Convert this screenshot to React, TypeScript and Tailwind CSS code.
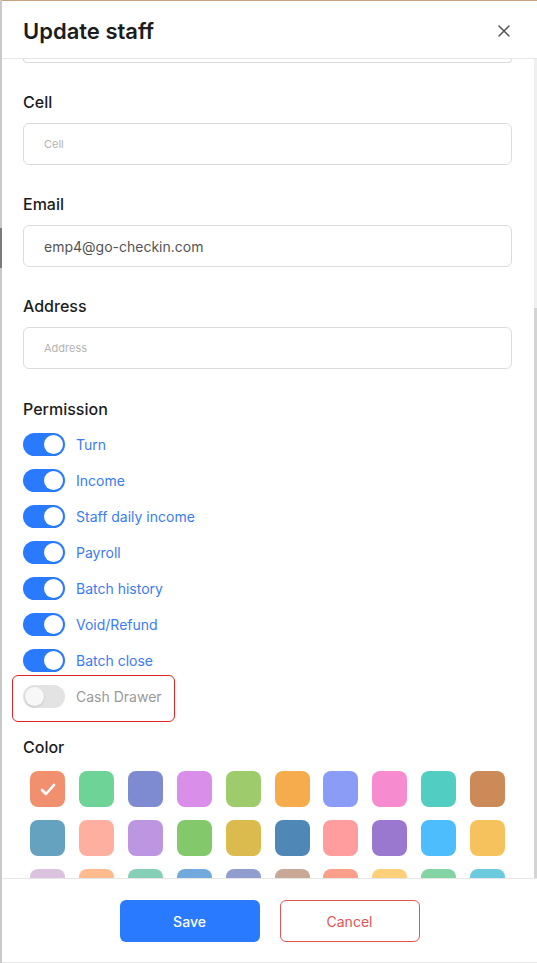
import { X } from "lucide-react"

const perms = [
  { name: "Turn", on: true },
  { name: "Income", on: true },
  { name: "Staff daily income", on: true },
  { name: "Payroll", on: true },
  { name: "Batch history", on: true },
  { name: "Void/Refund", on: true },
  { name: "Batch close", on: true },
  { name: "Cash Drawer", on: false },
]

const colors = [
  "#f0906e", "#6dd396", "#7f8bd0", "#d98ee9", "#9ecb6c", "#f6ab4c", "#8a9cf5", "#f78bcf", "#52cdc1", "#cc8a59",
  "#64a2c0", "#ffafa0", "#bc96e0", "#83c86a", "#dbbb4d", "#4f87b6", "#ff9c9d", "#9a78cf", "#4dbdfd", "#f5c25d",
  "#ddc1e0", "#ffbb8d", "#84cfb5", "#72aade", "#8f9dcf", "#c7a996", "#fa9f89", "#ffcf7b", "#84d3a3", "#6ccadf",
]

function Toggle({ on }: { on: boolean }) {
  return on ? (
    <div className="flex h-[23px] w-[42px] items-center justify-end rounded-full bg-[#2a7aff] px-[2px]">
      <div className="h-[19px] w-[19px] rounded-full bg-white" />
    </div>
  ) : (
    <div className="flex h-[23px] w-[42px] items-center justify-start rounded-full bg-[#e3e3e3] px-[2px]">
      <div className="h-[19px] w-[19px] rounded-full bg-[#f7f7f7] shadow-sm" />
    </div>
  )
}

function Field({ label, value, placeholder }: { label: string; value?: string; placeholder?: string }) {
  return (
    <div className="mt-[27px]">
      <div className="text-[16px] leading-[24px] font-medium text-[#1c1c1c]">{label}</div>
      <div className="mt-[9px] flex h-[42px] items-center rounded-md border border-[#dcdcdc] px-[20px]">
        {value ? (
          <span className="text-[14px] text-[#555]">{value}</span>
        ) : (
          <span className="text-[11px] text-[#b3b3b3]">{placeholder}</span>
        )}
      </div>
    </div>
  )
}

export default function App() {
  return (
    <div className="flex h-[963px] w-[537px] overflow-hidden bg-white font-['Inter',sans-serif]">
      {/* backdrop edge */}
      <div className="flex w-[2px] flex-col bg-[#c9c9c9]">
        <div className="h-[228px]" />
        <div className="h-[40px] bg-[#7a7a7a]" />
      </div>

      <div className="flex flex-1 flex-col">
        <div className="h-[1px] bg-[#c8a27c]" />
        <div className="flex h-[58px] items-center justify-between border-b border-[#e6e6e6] pt-[3px] pl-[21px] pr-[23px]">
          <h1 className="text-[22px] font-semibold text-[#1c1c1c]">Update staff</h1>
          <X className="h-[20px] w-[20px] text-[#555]" strokeWidth={1.8} />
        </div>

        <div className="flex flex-1 overflow-hidden">
          <div className="flex-1 pl-[21px] pr-[22px]">
            <div className="h-[4px] rounded-b-md border-x border-b border-[#dcdcdc]" />

            <Field label="Cell" placeholder="Cell" />
            <Field label="Email" value="emp4@go-checkin.com" />
            <Field label="Address" placeholder="Address" />

            <div className="mt-[28px] text-[16px] leading-[24px] font-medium text-[#1c1c1c]">Permission</div>
            <div className="mt-[5px]">
              {perms.map((p) => (
                <div key={p.name} className="relative flex h-[36px] items-center gap-[11px]">
                  {!p.on && (
                    <span className="absolute -left-[11px] -top-[3px] h-[47px] w-[163px] rounded-md border-[1.5px] border-[#e02424]" />
                  )}
                  <Toggle on={p.on} />
                  <span className={p.on ? "text-[14px] text-[#3b7bf6]" : "text-[14px] text-[#9a9a9a]"}>{p.name}</span>
                </div>
              ))}
            </div>

            <div className="mt-[21px] text-[16px] leading-[24px] font-medium text-[#1c1c1c]">Color</div>
            <div className="mt-[12px] grid grid-cols-10 gap-x-[14px] gap-y-[13px] px-[7px]">
              {colors.map((c, i) => (
                <div key={c + i} className="flex h-[36px] w-[35px] items-center justify-center rounded-lg" style={{ backgroundColor: c }}>
                  {i === 0 && (
                    <svg width="16" height="13" viewBox="0 0 16 13" fill="none">
                      <path d="M2 7l4 4 8-9" stroke="white" strokeWidth="2.6" strokeLinecap="round" strokeLinejoin="round" />
                    </svg>
                  )}
                </div>
              ))}
            </div>
          </div>
          {/* scrollbar */}
          <div className="flex w-[3px] flex-col bg-[#f0f0f0]">
            <div className="h-[249px]" />
            <div className="flex-1 bg-[#d4d4d4]" />
          </div>
        </div>

        <div className="flex h-[85px] items-start justify-center gap-[20px] border-t border-b border-[#e6e6e6] pt-[21px]">
          <button className="h-[42px] w-[140px] rounded-md bg-[#2a7aff] text-[14px] font-medium text-white">Save</button>
          <button className="h-[42px] w-[140px] rounded-md border border-[#e05555] text-[14px] text-[#e05555]">Cancel</button>
        </div>
      </div>
    </div>
  )
}
